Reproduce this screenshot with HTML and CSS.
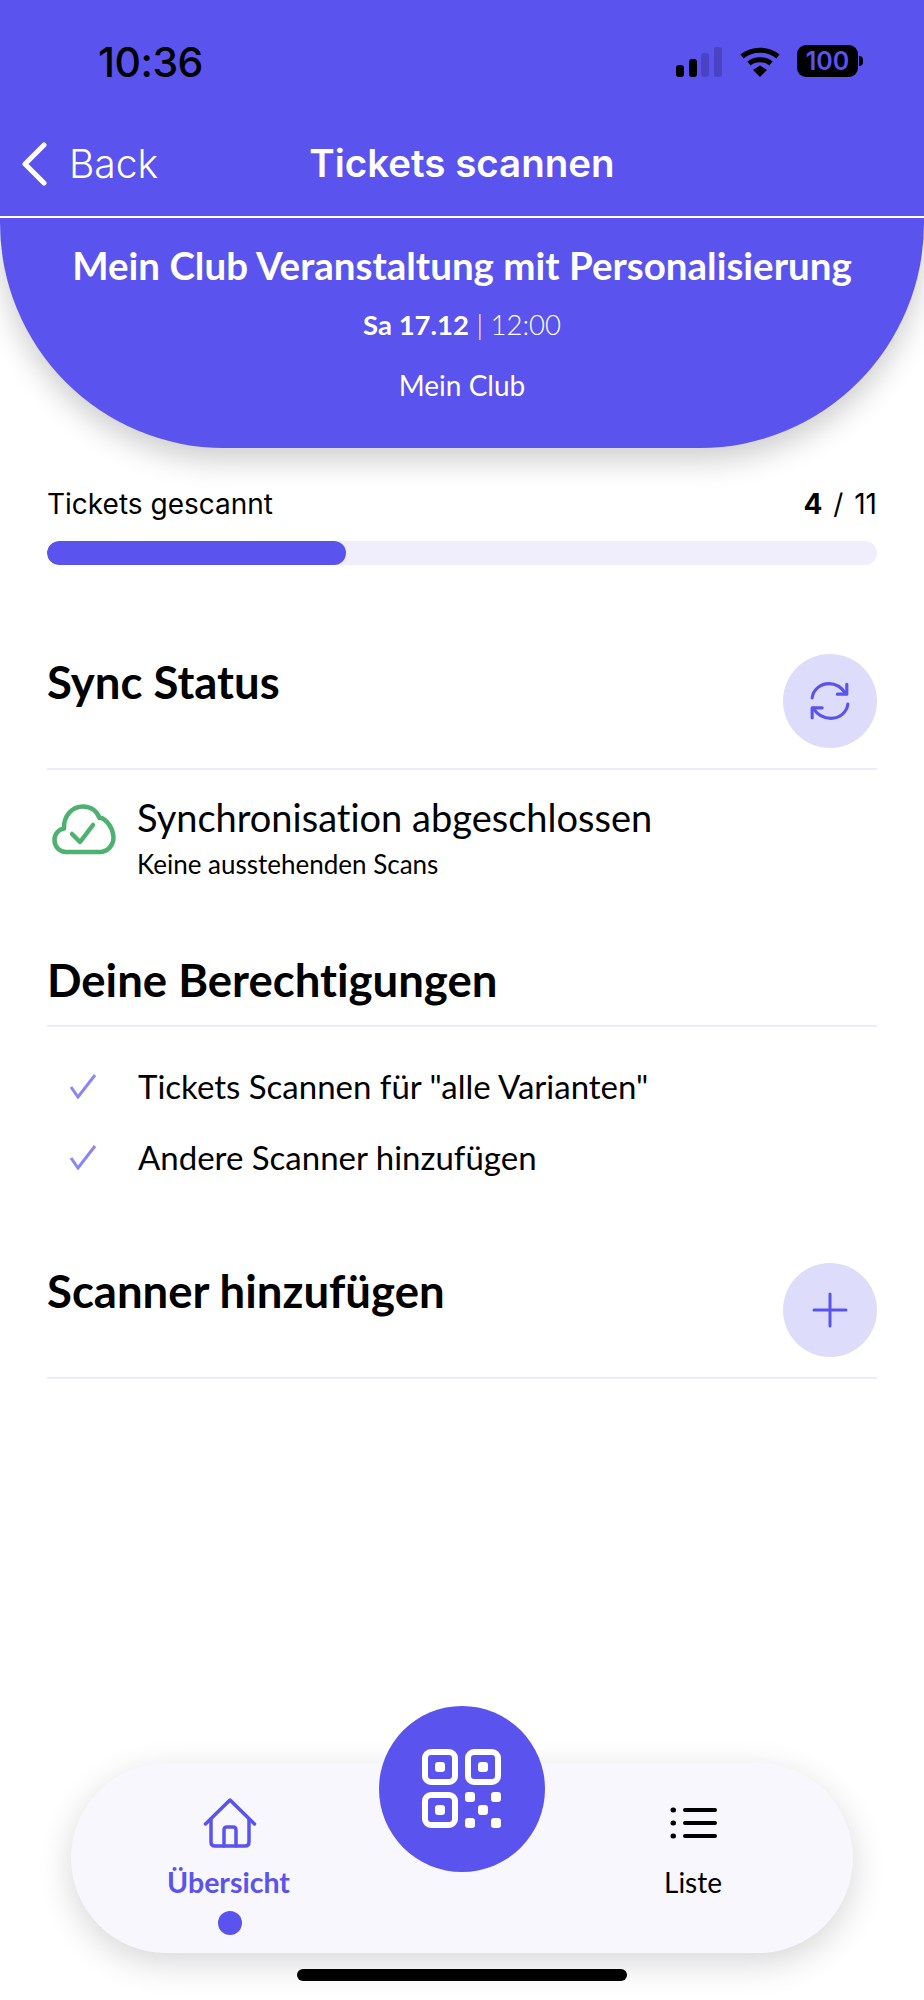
FILE: index.html
```html
<!DOCTYPE html>
<html lang="de">
<head>
    <meta charset="UTF-8">
    <meta name="viewport" content="width=device-width, initial-scale=1.0">
    <title>Tickets scannen</title>
    <link rel="stylesheet" href="styles.css">
</head>
<body>
<div class="page">

    <div class="status-bar">
        <span class="clock">10:36</span>
        <div class="status-icons">
            <svg class="signal" width="46" height="30" viewBox="0 0 46 30">
                <rect x="0" y="18" width="8" height="12" rx="3" fill="#000"/>
                <rect x="13" y="12" width="8" height="18" rx="3" fill="#000"/>
                <rect x="25" y="6" width="8" height="24" rx="3" fill="#4a44c4"/>
                <rect x="38" y="0" width="8" height="30" rx="3" fill="#4a44c4"/>
            </svg>
            <svg class="wifi" width="40" height="30" viewBox="0 0 40 30">
                <path d="M2 9.5C12 1 28 1 38 9.5" fill="none" stroke="#000" stroke-width="5"/>
                <path d="M9 16.5C15 11.5 25 11.5 31 16.5" fill="none" stroke="#000" stroke-width="5"/>
                <path d="M13 23L20 18.5L27 23L20 30Z" fill="#000"/>
            </svg>
            <div class="battery"><span>100</span></div>
        </div>
    </div>

    <div class="nav-bar">
        <div class="back">
            <svg width="26" height="44" viewBox="0 0 26 44">
                <path d="M23 3L4 22L23 41" fill="none" stroke="#fff" stroke-width="5" stroke-linecap="round" stroke-linejoin="round"/>
            </svg>
            <span>Back</span>
        </div>
        <div class="nav-title">Tickets scannen</div>
    </div>

    <div class="hero">
        <h1>Mein Club Veranstaltung mit Personalisierung</h1>
        <p class="hero-date"><b>Sa 17.12</b> | 12:00</p>
        <p class="hero-club">Mein Club</p>
    </div>

    <div class="content">
        <div class="progress-head">
            <span>Tickets gescannt</span>
            <span class="progress-count"><b>4</b> / 11</span>
        </div>
        <div class="progress">
            <div class="progress-fill" style="width: 36%"></div>
        </div>

        <div class="section-head sync-head">
            <h2>Sync Status</h2>
            <div class="round-btn">
                <svg width="42" height="42" viewBox="0 0 40 40" fill="none" stroke="#5a53ee" stroke-width="3" stroke-linecap="round" stroke-linejoin="round">
                    <path d="M3 17C4 9 11 3.500 19 3.500C26 3.500 31 7 35 13"/>
                    <path d="M36 4V13.500H27"/>
                    <path d="M37 23C36 31 29 36.500 21 36.500C14 36.500 8 33 4 27"/>
                    <path d="M3 36V26.500H12.500"/>
                </svg>
            </div>
        </div>
        <div class="sync-row">
            <svg class="cloud" width="64" height="52" viewBox="0 0 64 52" fill="none">
                <path d="M14 48C7.500 48 2.500 42.500 2.500 36C2.500 30 6.500 25.500 12 24.500C11.500 12 20 2.500 31 2.500C39 2.500 45 7 47.500 14C50 13 60 19 61.500 33C61.500 42 55 48 48 48Z" stroke="#4db26f" stroke-width="4.500" stroke-linejoin="round"/>
                <path d="M20 30L28 38L41 21" stroke="#4db26f" stroke-width="4.500" stroke-linecap="round" stroke-linejoin="round"/>
            </svg>
            <div>
                <div class="sync-title">Synchronisation abgeschlossen</div>
                <div class="sync-sub">Keine ausstehenden Scans</div>
            </div>
        </div>

        <div class="section-head perm-head">
            <h2>Deine Berechtigungen</h2>
        </div>
        <ul class="perm-list">
            <li>
                <svg width="28" height="26" viewBox="0 0 28 26"><path d="M2 14L9 24L26 2" fill="none" stroke="#8b86f5" stroke-width="3"/></svg>
                Tickets Scannen für "alle Varianten"
            </li>
            <li>
                <svg width="28" height="26" viewBox="0 0 28 26"><path d="M2 14L9 24L26 2" fill="none" stroke="#8b86f5" stroke-width="3"/></svg>
                Andere Scanner hinzufügen
            </li>
        </ul>

        <div class="section-head add-head">
            <h2>Scanner hinzufügen</h2>
            <div class="round-btn">
                <svg width="36" height="36" viewBox="0 0 36 36"><path d="M18 2V34M2 18H34" fill="none" stroke="#5a53ee" stroke-width="3" stroke-linecap="round"/></svg>
            </div>
        </div>
    </div>

    <div class="tab-bar">
        <div class="tab tab-active">
            <svg width="54" height="50" viewBox="0 0 54 50" fill="none" stroke="#5a53ee" stroke-width="3.500" stroke-linejoin="round" stroke-linecap="round">
                <path d="M2.500 26L27 2L51.500 26"/>
                <path d="M8 21V44C8 46.500 9.500 48 12 48H42C44.500 48 46 46.500 46 44V21"/>
                <path d="M21 48V32C21 30 22 29 24 29H30C32 29 33 30 33 32V48"/>
            </svg>
            <span>Übersicht</span>
            <div class="tab-dot"></div>
        </div>
        <div class="tab">
            <svg class="list-icon" width="48" height="32" viewBox="0 0 48 32" fill="none" stroke="#000" stroke-linecap="round">
                <path d="M16 3H46M16 16H46M16 29H46" stroke-width="4"/>
                <path d="M4 3H4.500M4 16H4.500M4 29H4.500" stroke-width="5"/>
            </svg>
            <span>Liste</span>
        </div>
        <div class="scan-btn">
            <svg width="80" height="80" viewBox="0 0 80 80" fill="none" stroke="#fff" stroke-width="6">
                <rect x="3" y="3" width="30" height="30" rx="6"/>
                <rect x="46" y="3" width="30" height="30" rx="6"/>
                <rect x="3" y="46" width="30" height="30" rx="6"/>
                <g fill="#fff" stroke="none">
                    <rect x="13" y="13" width="10" height="10" rx="3"/>
                    <rect x="56" y="13" width="10" height="10" rx="3"/>
                    <rect x="13" y="56" width="10" height="10" rx="3"/>
                    <rect x="43" y="43" width="10" height="10" rx="3"/>
                    <rect x="69" y="43" width="10" height="10" rx="3"/>
                    <rect x="56" y="56" width="10" height="10" rx="3"/>
                    <rect x="43" y="69" width="10" height="10" rx="3"/>
                    <rect x="69" y="69" width="10" height="10" rx="3"/>
                </g>
            </svg>
        </div>
    </div>

    <div class="home-line"></div>
</div>
</body>
</html>
```

FILE: styles.css
```css
body {
    margin: 0;
    background-color: #fff;
    font-family: Lato, "Liberation Sans", sans-serif;
    font-variant-ligatures: none;
    color: #000;
}
.page {
    height: 2000px;
    display: flex;
    flex-direction: column;
    overflow: hidden;
}

/* status bar */
.status-bar {
    height: 122px;
    box-sizing: border-box;
    padding: 40px 63px 0 98px;
    background-color: #5a53ee;
    display: flex;
    justify-content: space-between;
    align-items: flex-start;
}
.clock {
    font-family: Inter, sans-serif;
    font-size: 41px;
    font-weight: 500;
    line-height: 44px;
    letter-spacing: -0.5px;
}
.status-icons {
    display: flex;
    align-items: flex-start;
    padding-top: 7px;
}
.wifi {
    margin-left: 18px;
}
.battery {
    width: 61px;
    height: 32px;
    margin: -2px 3px 0 17px;
    background-color: #000;
    border-radius: 9px;
    display: flex;
    align-items: center;
    justify-content: center;
    font-family: Inter, sans-serif;
    font-size: 25px;
    font-weight: 600;
    color: #5a53ee;
    position: relative;
}
.battery:after {
    content: "";
    position: absolute;
    right: -5px;
    top: 11px;
    width: 4px;
    height: 10px;
    border-radius: 0 5px 5px 0;
    background-color: #000;
}

/* nav */
.nav-bar {
    height: 96px;
    box-sizing: border-box;
    background-color: #5a53ee;
    border-bottom: 2px solid #fff;
    display: flex;
    align-items: center;
    justify-content: center;
    position: relative;
    color: #fff;
    font-family: Inter, sans-serif;
    font-size: 39px;
}
.back {
    position: absolute;
    left: 21px;
    top: 18px;
    display: flex;
    align-items: center;
    gap: 22px;
    font-weight: 300;
}
.nav-title {
    font-size: 38.5px;
    font-weight: 600;
    margin-top: -12px;
}

/* hero */
.hero {
    height: 230px;
    box-sizing: border-box;
    padding-top: 24px;
    background-color: #5a53ee;
    border-radius: 0 0 224px 224px / 0 0 225px 225px;
    box-shadow: 0 12px 30px rgba(0, 0, 0, 0.2);
    color: #fff;
    text-align: center;
}
.hero h1 {
    margin: 0;
    font-size: 38.5px;
    font-weight: 700;
    line-height: 46px;
}
.hero-date {
    margin: 19px 0 0;
    font-size: 27.5px;
    font-weight: 300;
    line-height: 36px;
}
.hero-date b {
    font-weight: 700;
}
.hero-club {
    margin: 24px 0 0;
    font-size: 28px;
    font-weight: 400;
    line-height: 36px;
}

/* content */
.content {
    padding: 0 47px;
}
.progress-head {
    display: flex;
    justify-content: space-between;
    margin-top: 37px;
    font-family: Inter, sans-serif;
    font-size: 28px;
    line-height: 38px;
}
.progress-count {
    word-spacing: 3px;
}
.progress {
    height: 24px;
    margin-top: 18px;
    border-radius: 12px;
    background-color: #f0eefc;
    overflow: hidden;
}
.progress-fill {
    height: 100%;
    border-radius: 12px;
    background-color: #5a53ee;
}

.section-head {
    display: flex;
    justify-content: space-between;
    align-items: flex-start;
    border-bottom: 2px solid #eeecfa;
}
.section-head h2 {
    margin: 0;
    font-size: 45.5px;
    font-weight: 700;
    line-height: 56px;
}
.sync-head {
    margin-top: 89px;
    padding-bottom: 20px;
}
.round-btn {
    width: 94px;
    height: 94px;
    border-radius: 50%;
    background-color: #dddcfb;
    display: flex;
    align-items: center;
    justify-content: center;
}

.sync-row {
    display: flex;
    gap: 21px;
    padding: 25px 0 0 5px;
}
.cloud {
    margin-top: 9px;
}
.sync-title {
    font-size: 38px;
    line-height: 44px;
}
.sync-sub {
    margin-top: 9px;
    font-size: 26px;
    line-height: 32px;
}
.perm-head {
    margin-top: 72px;
    padding-bottom: 17px;
}
.perm-list {
    list-style: none;
    margin: 0;
    padding: 23px 0 0 22px;
}
.perm-list li {
    display: flex;
    align-items: center;
    gap: 41px;
    height: 71px;
    font-size: 33px;
}
.add-head {
    margin-top: 71px;
    padding-bottom: 20px;
}

/* tab bar */
.tab-bar {
    margin: auto 71px 0;
    height: 190px;
    box-sizing: border-box;
    padding-top: 35px;
    border-radius: 95px;
    background-color: #f8f7fe;
    box-shadow: 0 10px 34px rgba(0, 0, 0, 0.16);
    display: flex;
    justify-content: space-between;
    position: relative;
}
.tab {
    width: 124px;
    margin: 0 98px 0 97px;
    display: flex;
    flex-direction: column;
    align-items: center;
    font-size: 28px;
}
.tab span {
    position: absolute;
    top: 101px;
    line-height: 36px;
}
.list-icon {
    margin-top: 9px;
}
.tab-active {
    color: #5a53ee;
    font-size: 28.5px;
    font-weight: 700;
}
.tab-active span {
    margin-left: -3px;
}
.tab-dot {
    position: absolute;
    top: 148px;
    width: 24px;
    height: 24px;
    border-radius: 50%;
    background-color: #5a53ee;
}
.scan-btn {
    position: absolute;
    left: 308px;
    top: -57px;
    width: 166px;
    height: 166px;
    border-radius: 50%;
    background-color: #5a53ee;
    display: flex;
    align-items: center;
    justify-content: center;
}
.home-line {
    width: 330px;
    height: 12px;
    margin: 16px auto 19px;
    border-radius: 6px;
    background-color: #000;
}
```
